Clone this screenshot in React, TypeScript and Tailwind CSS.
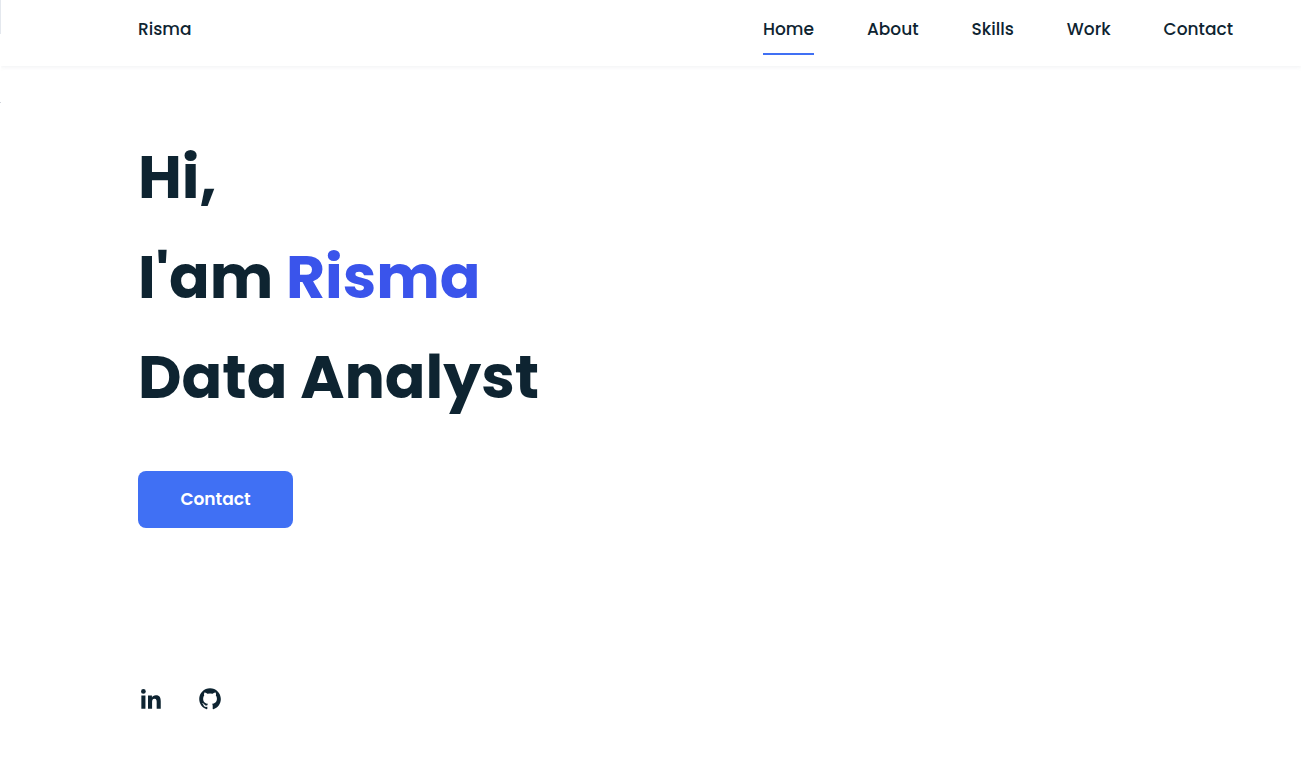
import { BiLogoGithub, BiLogoLinkedin } from "react-icons/bi";

const links = ["Home", "About", "Skills", "Work", "Contact"];

export default function App() {
  return (
    <div className="flex min-h-screen bg-white font-['Poppins','Inter',sans-serif] text-[#0e2431]">
      <div className="flex w-px flex-col gap-[68px]" aria-hidden="true">
        <span className="h-[34px] bg-[#e4e8ee]" />
        <span className="h-px bg-gray-300" />
      </div>
      <div className="mr-[5px] flex-1 overflow-x-clip">
        <header className="shadow-[0_1px_4px_rgba(146,161,176,0.15)]">
          <nav className="flex h-[66px] items-start justify-between pt-4 pr-[68px] pl-[137px] text-[17px] leading-[26px] font-medium">
            <a href="#home">Risma</a>
            <ul className="flex gap-[53px]">
              {links.map((label) => (
                <li key={label}>
                  <a
                    href={`#${label.toLowerCase()}`}
                    className={
                      label === "Home"
                        ? "block border-b-2 border-[#4070f4] pb-[11px]"
                        : "block pb-[11px]"
                    }
                  >
                    {label}
                  </a>
                </li>
              ))}
            </ul>
          </nav>
        </header>
        <main id="home" className="flex flex-col items-start pt-[61px] pr-[68px] pl-[137px]">
          <h1 className="text-[60px] leading-[100px] font-bold">
            Hi,
            <br />
            I'am <span className="text-[#3a54eb]">Risma</span>
            <br />
            Data Analyst
          </h1>
          <a
            href="#contact"
            className="mt-11 flex h-[57px] w-[155px] items-center justify-center rounded-lg bg-[#4070f4] text-[17px] font-semibold text-white"
          >
            Contact
          </a>
          <div className="mt-[158px] flex gap-[33px] text-[26px]">
            <a href="#linkedin" aria-label="LinkedIn">
              <BiLogoLinkedin />
            </a>
            <a href="#github" aria-label="GitHub">
              <BiLogoGithub />
            </a>
          </div>
        </main>
      </div>
    </div>
  );
}
